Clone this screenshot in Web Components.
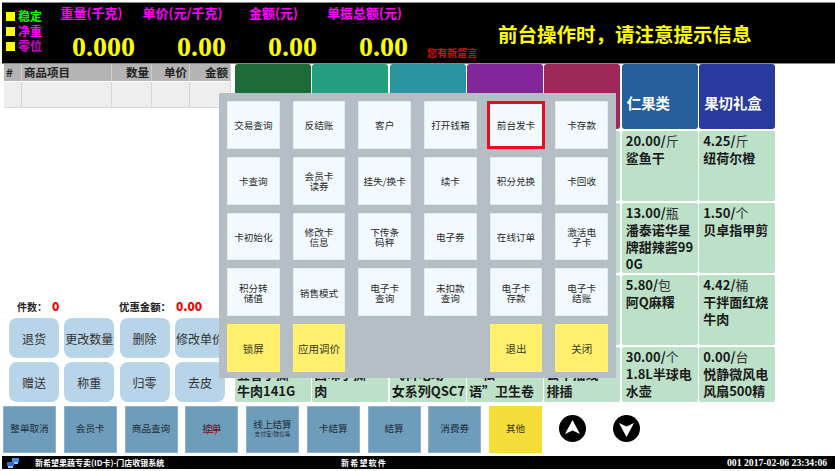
<!DOCTYPE html>
<html lang="zh-CN">
<head>
<meta charset="utf-8">
<title>门店收银系统</title>
<style>
  html, body { margin: 0; padding: 0; background: #fff; overflow: hidden; }
  body { font-family: "Noto Sans CJK SC", "Noto Sans", sans-serif; color: #222; }
</style>
</head>
<body>
<pos-app></pos-app>
<script>
const CJK = '"Noto Sans CJK SC", "Noto Sans", sans-serif';

class PosHeader extends HTMLElement {
  constructor() {
    super();
    const shadowRoot = this.attachShadow({mode: 'open'});
    shadowRoot.innerHTML = `
      <style>
        :host { display: flex; height: 60px; margin-left: 2px; background: #000; border-top: 1px solid #888; border-bottom: 1px solid #888; }
        .flags { width: 42px; padding: 7px 0 0 4px; box-sizing: border-box; display: flex; flex-direction: column; gap: 3px; }
        .flag { display: flex; align-items: center; gap: 3px; height: 12px; font-size: 12px; line-height: 12px; font-weight: 700; }
        .flag i { width: 9px; height: 9px; background: #ff0; flex: none; }
        .measure { width: 91px; display: flex; flex-direction: column; }
        .measure b { padding-left: 4px; height: 20px; text-align: center; font-size: 13px; line-height: 20px; color: #f0f; white-space: nowrap; }
        .measure span { margin-top: 9px; text-align: right; font: 700 28px/30px "Liberation Serif", serif; color: #ff0; }
        .msg { margin: 43px 0 0 19px; font-size: 10px; line-height: 13px; font-weight: 700; color: #e00000; white-space: nowrap; }
        .notice { margin: 17px 0 0 21px; font-size: 19.5px; line-height: 28px; font-weight: 700; color: #ff0; white-space: nowrap; }
      </style>
      <div class="flags">
        <div class="flag" style="color:#0f0"><i></i>稳定</div>
        <div class="flag" style="color:#f0f"><i></i>净重</div>
        <div class="flag" style="color:#d000d0"><i></i>零位</div>
      </div>
      <div class="measure"><b>重量(千克)</b><span>0.000</span></div>
      <div class="measure"><b>单价(元/千克)</b><span>0.00</span></div>
      <div class="measure"><b>金额(元)</b><span>0.00</span></div>
      <div class="measure"><b>单据总额(元)</b><span>0.00</span></div>
      <div class="msg">您有新留言</div>
      <div class="notice">前台操作时，请注意提示信息</div>
    `;
  }
}

class OrderTable extends HTMLElement {
  constructor() {
    super();
    const shadowRoot = this.attachShadow({mode: 'open'});
    shadowRoot.innerHTML = `
      <style>
        :host { display: grid; grid-template-columns: 18px 90px 40px 38px 41px; grid-template-rows: 17px 26px; row-gap: 1px; margin-left: 4px; width: 227px; font-size: 11.5px; line-height: 17px; font-weight: 700; color: #222; }
        .h { background: #b4b4b4; border-right: 1px solid #d0d0d0; padding: 0 2px; box-sizing: border-box; white-space: nowrap; }
        .r { text-align: right; }
        .c { background: #eee; border-right: 1px solid #d6d6d6; border-bottom: 1px solid #d6d6d6; box-sizing: border-box; }
      </style>
      <div class="h">#</div><div class="h">商品项目</div><div class="h r">数量</div><div class="h r">单价</div><div class="h r">金额</div>
      <div class="c"></div><div class="c"></div><div class="c"></div><div class="c"></div><div class="c"></div>
    `;
  }
}

class OrderSummary extends HTMLElement {
  constructor() {
    super();
    const shadowRoot = this.attachShadow({mode: 'open'});
    shadowRoot.innerHTML = `
      <style>
        :host { display: flex; height: 14px; margin: 0 0 5px 17px; font-size: 10px; line-height: 14px; font-weight: 700; color: #222; white-space: nowrap; }
        b { color: #f00000; font-size: 12px; margin-left: 5px; }
        .first { width: 102px; flex: none; }
        .second { font-size: 10.4px; }
      </style>
      <span class="first">件数：<b>0</b></span>
      <span class="second">优惠金额：<b>0.00</b></span>
    `;
  }
}

class OpButton extends HTMLElement {
  constructor() {
    super();
    const shadowRoot = this.attachShadow({mode: 'open'});
    shadowRoot.innerHTML = `
      <style>
        :host { display: flex; align-items: center; justify-content: center; height: 40px; background: #b8d4e8; border-radius: 8px; font-size: 12px; color: #333; white-space: nowrap; }
      </style>
      <slot></slot>
    `;
  }
}

class MenuTile extends HTMLElement {
  constructor() {
    super();
    const shadowRoot = this.attachShadow({mode: 'open'});
    shadowRoot.innerHTML = `
      <style>
        :host { display: flex; align-items: center; justify-content: center; text-align: center; padding-top: 1px; background: #f2faff; border: 1px solid #e2ecef; box-sizing: border-box; font-size: 9.6px; line-height: 10px; color: #2a2a2a; }
        :host([accent]) { background: #fff06e; border-color: #fff06e; font-size: 10.5px; color: #3a3a20; }
        :host([selected]) { border: 3px solid #e60f1e; margin: 0 -3px; }
      </style>
      <div><slot></slot></div>
    `;
  }
}

class MenuPanel extends HTMLElement {
  constructor() {
    super();
    const shadowRoot = this.attachShadow({mode: 'open'});
    shadowRoot.innerHTML = `
      <style>
        :host { position: absolute; left: 219px; top: 93px; width: 397px; height: 285px; box-sizing: border-box; padding: 8px 8px 6px 8px; background: #b4bec4; display: grid; grid-template-columns: repeat(6, 1fr); grid-template-rows: repeat(5, 1fr); column-gap: 13px; row-gap: 8px; }
      </style>
      <slot></slot>
    `;
  }
}

class ProductCell extends HTMLElement {
  constructor() {
    super();
    const shadowRoot = this.attachShadow({mode: 'open'});
    shadowRoot.innerHTML = `
      <style>
        :host { display: block; overflow: hidden; background: #bce0c8; border-radius: 2px; padding: 1px 3px 0 4px; box-sizing: border-box; font-size: 13px; line-height: 17px; font-weight: 700; color: #1a1a1a; word-break: break-all; }
        :host([lines]) { white-space: nowrap; padding-left: 2px; }
        .price { display: block; white-space: nowrap; }
      </style>
      <span class="price"><slot name="price"></slot></span><slot></slot>
    `;
  }
}

class CategoryTab extends HTMLElement {
  constructor() {
    super();
    const shadowRoot = this.attachShadow({mode: 'open'});
    shadowRoot.innerHTML = `
      <style>
        :host { display: flex; align-items: flex-end; background: var(--tab-color, #26609c); border-radius: 3px; padding: 0 0 16px 5px; box-sizing: border-box; font-size: 14.4px; line-height: 20px; font-weight: 700; color: #fff; white-space: nowrap; }
      </style>
      <slot></slot>
    `;
  }
}

class ActionButton extends HTMLElement {
  constructor() {
    super();
    const shadowRoot = this.attachShadow({mode: 'open'});
    shadowRoot.innerHTML = `
      <style>
        :host { display: flex; flex-direction: column; align-items: center; justify-content: center; position: relative; width: 53px; height: 47px; background: #6e9dbb; border: 1px solid #8fb3ca; box-sizing: border-box; font-size: 9.6px; line-height: 11px; color: #1d2b36; padding-bottom: 2px; }
        :host([accent]) { background: #f5dd3a; border-color: #f5dd3a; color: #3a3410; }
        .sub { font-size: 5.6px; line-height: 9px; }
        .badge { position: absolute; left: 0; right: 0; top: 16px; text-align: center; color: #e00000; font-size: 10px; }
      </style>
      <slot></slot><span class="sub"><slot name="sub"></slot></span><span class="badge"><slot name="badge"></slot></span>
    `;
  }
}

class PageArrow extends HTMLElement {
  constructor() {
    super();
    const down = this.hasAttribute('down');
    const shadowRoot = this.attachShadow({mode: 'open'});
    shadowRoot.innerHTML = `
      <style>
        :host { display: block; width: 27px; height: 27px; flex: none; }
        svg { display: block; }
      </style>
      <svg width="27" height="27" viewBox="0 0 27 27">
        <circle cx="13.5" cy="13.5" r="13.5" fill="#000"/>
        <path d="${down ? 'M6 8L13.5 11.5L21 8L13.5 22Z' : 'M6 19L13.5 15.5L21 19L13.5 5Z'}" fill="#fff"/>
      </svg>
    `;
  }
}

class StatusBar extends HTMLElement {
  constructor() {
    super();
    const shadowRoot = this.attachShadow({mode: 'open'});
    shadowRoot.innerHTML = `
      <style>
        :host { display: flex; align-items: center; height: 13px; margin: 3px 0 0 2px; background: #000; color: #fff; font-size: 8px; font-weight: 700; white-space: nowrap; }
        svg { margin-left: 5px; flex: none; }
        .title { margin-left: 16px; width: 306px; flex: none; }
        .brand { width: 386px; flex: none; letter-spacing: 1.2px; font-family: "Liberation Serif", ${CJK}; }
        .clock { font: 700 9.7px/13px "Liberation Serif", serif; }
      </style>
      <svg width="12" height="11" viewBox="0 0 12 11">
        <path d="M5 1H12V5H5Z" fill="#3f8fe8"/>
        <path d="M0 5H7V9H0Z" fill="#2a6cd0"/>
        <path d="M1 9H6V11H1Z" fill="#9cc6f2"/>
        <path d="M7 5H11V7H7Z" fill="#9cc6f2"/>
      </svg>
      <span class="title">新希望果蔬专卖(ID卡)-门店收银系统</span>
      <span class="brand">新希望软件</span>
      <span class="clock">001 2017-02-06 23:34:06</span>
    `;
  }
}

class PosApp extends HTMLElement {
  constructor() {
    super();
    const ops = ['退货', '更改数量', '删除', '修改单价', '赠送', '称重', '归零', '去皮'];
    const tabs = ['#1c6a38', '#269e82', '#2a94a0', '#82269a', '#9e2858', '#26609c', '#283a9c'];
    const tabNames = {5: '仁果类', 6: '果切礼盒'};
    // keyed by cell index: 7 per row, the first five of rows 1-3 sit under the menu
    const products = {
      5: ['20.00', '斤', '鲨鱼干'], 6: ['4.25', '斤', '纽荷尔橙'],
      12: ['13.00', '瓶', '潘泰诺华星牌甜辣酱990G'], 13: ['1.50', '个', '贝卓指甲剪'],
      19: ['5.80', '包', '阿Q麻糬'], 20: ['4.42', '桶', '干拌面红烧牛肉'],
      26: ['30.00', '个', '1.8L半球电水壶'], 27: ['0.00', '台', '悦静微风电风扇500精品']
    };
    // bottom row, first lines are covered by the menu
    const covered = {
      21: '五香手撕<br>牛肉141G', 22: '卤味手撕<br>肉',
      23: '飞科电动<br>女系列QSC7', 24: '“私<br>语”卫生卷<br>纸', 25: '公牛插线<br>排插'
    };

    const tiles = [
      '交易查询', '反结账', '客户', '打开钱箱', '前台发卡', '卡存款',
      '卡查询', '会员卡<br>读券', '挂失/换卡', '续卡', '积分兑换', '卡回收',
      '卡初始化', '修改卡<br>信息', '下传条<br>码秤', '电子券', '在线订单', '激活电<br>子卡',
      '积分转<br>储值', '销售模式', '电子卡<br>查询', '未扣款<br>查询', '电子卡<br>存款', '电子卡<br>结账'
    ];

    const cells = Array.from({length: 28}, (_, i) => {
      if (covered[i]) return `<product-cell lines><span slot="price">&nbsp;</span>${covered[i]}</product-cell>`;
      const p = products[i];
      if (!p) return '<product-cell></product-cell>';
      return `<product-cell><span slot="price">${p[0]}/<small>${p[1]}</small></span>${p[2]}</product-cell>`;
    });

    const shadowRoot = this.attachShadow({mode: 'open'});
    shadowRoot.innerHTML = `
      <style>
        :host { display: block; position: relative; width: 835px; height: 471px; padding-top: 2px; box-sizing: border-box; overflow: hidden; font-family: ${CJK}; }
        .main { display: flex; height: 338px; }
        .left { width: 235px; flex: none; display: flex; flex-direction: column; }
        .spacer { flex: 1; }
        .ops { display: grid; grid-template-columns: repeat(4, 50px); column-gap: 5.3px; row-gap: 4px; margin-left: 9px; }
        .grid { width: 540px; flex: none; display: grid; grid-template-columns: repeat(7, 1fr); grid-template-rows: 65px 70px 70px 70px 55px; column-gap: 1.5px; row-gap: 2px; }
        .actions { display: flex; align-items: center; margin: 4px 0 0 3px; gap: 7.75px; height: 47px; }
        .arrows { display: flex; gap: 26.3px; margin: -2px 0 0 9.5px; }
        small { font-size: 13px; font-weight: 400; color: #333; }
      </style>
      <pos-header></pos-header>
      <div class="main">
        <div class="left">
          <order-table></order-table>
          <div class="spacer"></div>
          <order-summary></order-summary>
          <div class="ops">${ops.map(t => `<op-button>${t}</op-button>`).join('')}</div>
        </div>
        <div class="grid">
          ${tabs.map((c, i) => `<category-tab style="--tab-color:${c}">${tabNames[i] || ''}</category-tab>`).join('')}
          ${cells.join('')}
        </div>
      </div>
      <div class="actions">
        <action-button>整单取消</action-button>
        <action-button>会员卡</action-button>
        <action-button>商品查询</action-button>
        <action-button>挂单<span slot="badge">(1)</span></action-button>
        <action-button>线上结算<span slot="sub">支付宝/微信等</span></action-button>
        <action-button>卡结算</action-button>
        <action-button>结算</action-button>
        <action-button>消费券</action-button>
        <action-button accent>其他</action-button>
        <div class="arrows"><page-arrow></page-arrow><page-arrow down></page-arrow></div>
      </div>
      <status-bar></status-bar>
      <menu-panel>
        ${tiles.map(t => `<menu-tile ${t === '前台发卡' ? 'selected' : ''}>${t}</menu-tile>`).join('')}
        <menu-tile accent>锁屏</menu-tile>
        <menu-tile accent>应用调价</menu-tile>
        <span></span><span></span>
        <menu-tile accent>退出</menu-tile>
        <menu-tile accent>关闭</menu-tile>
      </menu-panel>
    `;
  }
}

customElements.define('pos-header', PosHeader);
customElements.define('order-table', OrderTable);
customElements.define('order-summary', OrderSummary);
customElements.define('op-button', OpButton);
customElements.define('menu-tile', MenuTile);
customElements.define('menu-panel', MenuPanel);
customElements.define('product-cell', ProductCell);
customElements.define('category-tab', CategoryTab);
customElements.define('action-button', ActionButton);
customElements.define('page-arrow', PageArrow);
customElements.define('status-bar', StatusBar);
customElements.define('pos-app', PosApp);
</script>
</body>
</html>
